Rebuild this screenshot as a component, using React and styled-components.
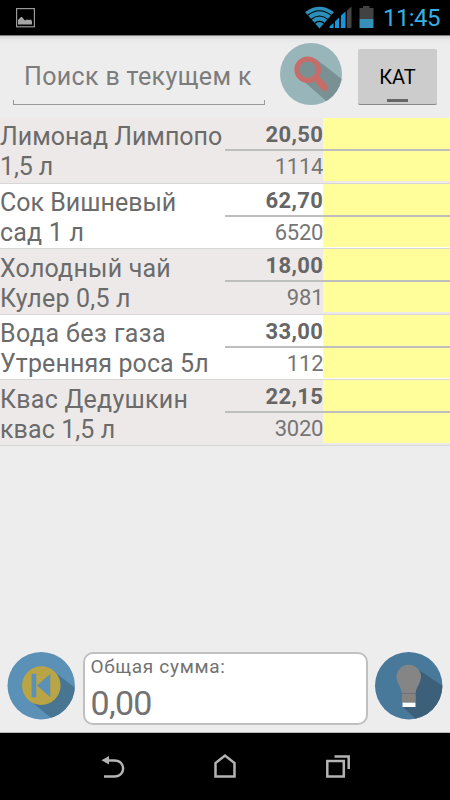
import React from 'react';
import styled, { createGlobalStyle } from 'styled-components';

const GlobalStyle = createGlobalStyle`
	* {
		box-sizing: border-box;
	}

	body {
		margin: 0;
		background: #000;
		font-family: Roboto, 'Liberation Sans', sans-serif;
	}
`;

const products = [
	{ name: ['Лимонад Лимпопо', '1,5 л'], spacing: [0, -0.1], price: '20,50', stock: '1114' },
	{ name: ['Сок Вишневый', 'сад 1 л'], spacing: [0, 0.2], price: '62,70', stock: '6520' },
	{ name: ['Холодный чай', 'Кулер 0,5 л'], spacing: [0.2, 0.2], price: '18,00', stock: '981' },
	{ name: ['Вода без газа', 'Утренняя роса 5л'], spacing: [0.45, 0.1], price: '33,00', stock: '112' },
	{ name: ['Квас Дедушкин', 'квас 1,5 л'], spacing: [0.25, 0.1], price: '22,15', stock: '3020' },
];

const Screen = styled.div`
	display: flex;
	flex-direction: column;
	width: 450px;
	height: 800px;
	overflow: hidden;
	background: #ededed;
`;

const StatusBar = styled.header`
	display: flex;
	flex: none;
	align-items: flex-start;
	height: 35px;
	background: #000;
`;

const PictureIcon = styled.svg`
	margin: 8px 0 0 16px;
`;

const StatusIcons = styled.svg`
	margin-left: auto;
`;

const Clock = styled.span`
	width: 76px;
	padding-left: 9px;
	color: #35b0e0;
	font-size: 24px;
	line-height: 37px;
	letter-spacing: -0.6px;
	white-space: nowrap;
`;

const Toolbar = styled.div`
	display: flex;
	flex: none;
	align-items: flex-start;
	height: 83px;
	padding-left: 13px;
	background: linear-gradient(#747474 0, #858585 1px, #d4d4d4 1px, #e6e6e6 4px, #ededed 9px);
`;

const SearchField = styled.div`
	width: 252px;
	height: 70px;
	padding: 24px 12px 0 11px;
	overflow: hidden;
	background:
		linear-gradient(#999, #999) left bottom / 1px 5px no-repeat,
		linear-gradient(#999, #999) right bottom / 1px 5px no-repeat,
		linear-gradient(#999, #999) left bottom / 100% 1px no-repeat;
	color: #7c7c7c;
	font-size: 25px;
	line-height: 36px;
	letter-spacing: 0.35px;
	white-space: nowrap;
`;

const SearchIcon = styled.svg`
	margin: 8px 0 0 15px;
`;

const CategoryButton = styled.div`
	display: flex;
	flex-direction: column;
	align-items: center;
	width: 79px;
	height: 56px;
	margin: 14px 0 0 16px;
	border-bottom: 1px solid #888;
	border-radius: 2px;
	background: #ccc;
	color: #000;
	font-size: 20px;
	line-height: 56px;

	&::after {
		content: '';
		width: 21px;
		height: 3px;
		margin-top: -6px;
		background: #666;
	}
`;

const List = styled.main`
	flex: 1;
`;

const Row = styled.div`
	display: flex;
	height: 65.6px;
	border-bottom: 1px solid #d8d7d7;
	background: ${(p) => (p.$shaded ? '#ede9e8' : '#fff')};
`;

const Name = styled.div`
	width: 225px;
	padding-top: 4.4px;
	color: #6b6b6b;
	font-size: 25px;
	line-height: 30px;
	white-space: nowrap;
`;

const NameLine = styled.div`
	letter-spacing: ${(p) => p.$spacing}px;
`;

const Figures = styled.div`
	flex: 1;
`;

const Figure = styled.div`
	display: flex;
	height: ${(p) => (p.$strong ? 33 : 30)}px;
	border-bottom: ${(p) => (p.$strong ? '2px solid #bdbebd' : '0')};
	color: ${(p) => (p.$strong ? '#666' : '#757575')};
	font-size: 22px;
	font-weight: ${(p) => (p.$strong ? 700 : 400)};
	line-height: ${(p) => (p.$strong ? 33 : 32)}px;
	letter-spacing: ${(p) => (p.$strong ? 0.4 : -0.2)}px;
`;

const Value = styled.span`
	width: 98.3px;
	text-align: right;
`;

const Quantity = styled.span`
	flex: 1;
	background: #fffe9b;
`;

const Footer = styled.footer`
	display: flex;
	flex: none;
	height: 81px;
	padding-left: 7px;
	border-bottom: 1px solid #b8b8b8;
`;

const Total = styled.div`
	width: 285px;
	height: 73px;
	margin: 0 7px 0 6.5px;
	padding: 0 6px;
	border: 2px solid #c0c0c0;
	border-radius: 10px;
	background: #fff;
	color: #727272;
`;

const TotalLabel = styled.div`
	font-size: 19px;
	line-height: 25px;
	letter-spacing: 0.7px;
`;

const TotalValue = styled.div`
	font-size: 34px;
	line-height: 49px;
	letter-spacing: -0.7px;
`;

const NavBar = styled.nav`
	display: flex;
	flex: none;
	justify-content: center;
	height: 67px;
	background: #000;
`;

const Product = ({ product, shaded }) => (
	<Row $shaded={shaded}>
		<Name>
			{product.name.map((line, i) => (
				<NameLine key={line} $spacing={product.spacing[i]}>
					{line}
				</NameLine>
			))}
		</Name>

		<Figures>
			<Figure $strong>
				<Value>{product.price}</Value>
				<Quantity />
			</Figure>
			<Figure>
				<Value>{product.stock}</Value>
				<Quantity />
			</Figure>
		</Figures>
	</Row>
);

const Status = () => (
	<StatusBar>
		<PictureIcon width="19" height="20" viewBox="0 0 19 20">
			<rect x="0.6" y="0.6" width="17.8" height="18.2" fill="none" stroke="#999" strokeWidth="1.2" />
			<path d="M2 16.5V12l2-2 1-1h1l2 2.5 1 1 2-1 2 .5 2-.5 1 2v3z" fill="#a5a5a5" />
		</PictureIcon>

		<StatusIcons width="70" height="35" viewBox="0 0 70 35">
			<path d="M1 12Q15.500 1.500 30 12L15.500 28.500z" fill="#2b8fb9" />
			<g fill="none" stroke="#000" strokeWidth="1.1">
				<path d="M3.500 15.500Q15.500 6 27.500 15.500" />
				<path d="M7 19.500Q15.500 12.500 24 19.500" />
				<path d="M10.500 23.500Q15.500 19.300 20.500 23.500" />
			</g>
			<path d="M25.500 28V26.500L29.500 23V28zM31 28V21.500L35 17.500V28zM37 28V15.500L41.500 11.500V28z" fill="#0f98e0" />
			<path d="M43 28V10.500L47.500 6.500V28z" fill="#454545" />
			<path d="M55.500 8H59V6H65.500V8H69.500V19H55.500z" fill="#424242" />
			<path d="M55.500 19H69.500V28H55.500z" fill="#368fb6" />
		</StatusIcons>

		<Clock>11:45</Clock>
	</StatusBar>
);

const Search = () => (
	<SearchIcon width="62" height="62" viewBox="0 0 62 62">
		<defs>
			<clipPath id="search-disc">
				<circle cx="31" cy="31" r="31" />
			</clipPath>
		</defs>
		<circle cx="31" cy="31" r="31" fill="#98b5b9" />
		<path d="M36 16L72 44L60 70L17 32.500z" fill="#7a9194" clipPath="url(#search-disc)" />
		<path d="M36.500 35.500L44.500 44.500" stroke="#c76d69" strokeWidth="7" strokeLinecap="round" />
		<circle cx="27.700" cy="26.700" r="10.800" fill="#7a9194" stroke="#c76d69" strokeWidth="5" />
	</SearchIcon>
);

const Back = () => (
	<svg width="69" height="69" viewBox="0 0 69 69">
		<defs>
			<clipPath id="back-disc">
				<circle cx="34.200" cy="33.700" r="33.700" />
			</clipPath>
		</defs>
		<circle cx="34.200" cy="33.700" r="33.700" fill="#5b90b7" />
		<path d="M50 22L84 48L66 84L20 46z" fill="#477592" clipPath="url(#back-disc)" />
		<circle cx="34.300" cy="33.600" r="19.300" fill="#b9a545" />
		<path d="M24.600 21.700H29.300V45.300H24.600zM30 33.500L43.300 21.700V45.300z" fill="#5b90b7" />
	</svg>
);

const Bulb = () => (
	<svg width="68" height="69" viewBox="0 0 68 69">
		<defs>
			<clipPath id="bulb-disc">
				<circle cx="33.700" cy="33.700" r="33.700" />
			</clipPath>
		</defs>
		<circle cx="33.700" cy="33.700" r="33.700" fill="#48799b" />
		<path d="M44 18L72 37V80H54L28 55z" fill="#3c6079" clipPath="url(#bulb-disc)" />
		<path
			d="M27 43C27 35 21.500 32 21.500 24A12.300 12.300 0 0 1 46 24C46 32 40.500 35 40.500 43V50H27z"
			fill="#858585"
		/>
		<path d="M27 41.500H40.500" stroke="#72717b" strokeWidth="1.200" />
		<path d="M27.500 43.500H40.500V50H27.500z" fill="#86827d" />
		<path d="M27.500 50.500H40.500V55H27.500z" fill="#fff" />
	</svg>
);

const Navigation = () => (
	<NavBar>
		<svg width="290" height="67" viewBox="0 0 290 67" fill="none" stroke="#b4b4b4">
			<path d="M26 27.500H34.500C46 27.500 46 43.500 34.500 43.500H24" strokeWidth="2.500" />
			<path d="M21.500 27.300L29 23V31.500z" fill="#b4b4b4" stroke="none" />
			<path d="M135.500 43.500V30L145 22.500L154.500 30V43.500z" strokeWidth="2.500" />
			<path d="M247.300 28H263.800V43.500H247.300zM254.500 23.500H268.700V36" strokeWidth="2.500" />
		</svg>
	</NavBar>
);

export default function App() {
	return (
		<Screen>
			<GlobalStyle />
			<Status />

			<Toolbar>
				<SearchField>Поиск в текущем к</SearchField>
				<Search />
				<CategoryButton>КАТ</CategoryButton>
			</Toolbar>

			<List>
				{products.map((product, i) => (
					<Product key={product.name[0]} product={product} shaded={i % 2 === 0} />
				))}
			</List>

			<Footer>
				<Back />
				<Total>
					<TotalLabel>Общая сумма:</TotalLabel>
					<TotalValue>0,00</TotalValue>
				</Total>
				<Bulb />
			</Footer>

			<Navigation />
		</Screen>
	);
}
